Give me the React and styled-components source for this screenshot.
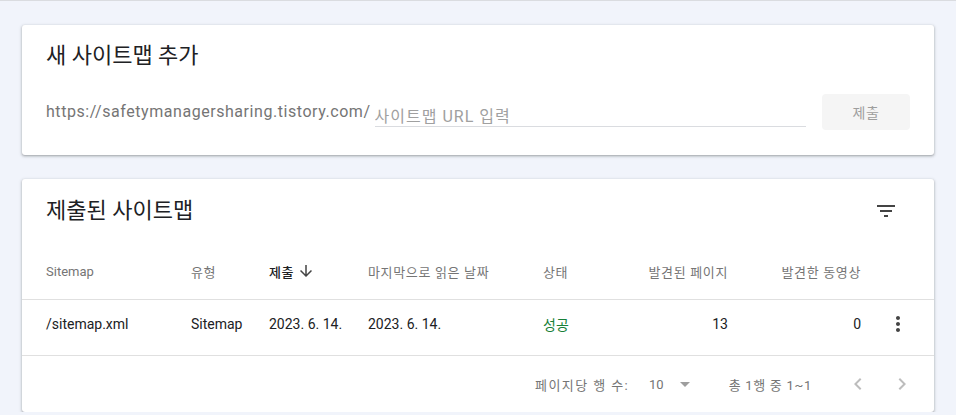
import React from 'react'
import styled, { createGlobalStyle } from 'styled-components'

const GlobalStyle = createGlobalStyle`
  html, body {
    margin: 0;
    padding: 0;
    background: #f1f4fb;
    font-family: Roboto, "Noto Sans CJK KR", sans-serif;
    color: #202124;
  }
`

const Page = styled.div`
  border-top: 1px solid #dadce0;
  padding: 24px 22px 0;
  display: flex;
  flex-direction: column;
  gap: 24px;
`

const Card = styled.section`
  background: #fff;
  border-radius: 3px;
  box-shadow: 0 1px 2px 0 rgba(60, 64, 67, 0.3), 0 1px 3px 1px rgba(60, 64, 67, 0.15);
`

const AddCard = styled(Card)`
  padding: 17px 24px 25px;
`

const Title = styled.h2`
  margin: 0;
  font-size: 22px;
  line-height: 28px;
  font-weight: 400;
  color: #202124;
`

const InputRow = styled.div`
  display: flex;
  align-items: center;
  height: 36px;
  margin-top: 24px;
`

const Prefix = styled.span`
  font-size: 16px;
  line-height: 20px;
  letter-spacing: 0.55px;
  color: #757575;
  margin-right: 4px;
`

const UrlInput = styled.input`
  flex: 1;
  box-sizing: border-box;
  height: 24px;
  margin-top: 6px;
  padding: 4px 0 0;
  border: none;
  border-bottom: 1px solid #dadce0;
  outline: none;
  font-family: inherit;
  font-size: 16px;
  letter-spacing: 1px;
  color: #202124;
  background: transparent;

  &::placeholder {
    color: #a0a0a0;
  }
`

const SubmitButton = styled.button`
  width: 88px;
  height: 36px;
  margin-left: 16px;
  border: none;
  border-radius: 4px;
  background: #f5f5f5;
  color: #9e9e9e;
  font-family: inherit;
  font-size: 14px;
  letter-spacing: 0.5px;
`

const TitleBar = styled.div`
  display: flex;
  align-items: center;
  justify-content: space-between;
  height: 64px;
  padding: 0 24px;
`

const IconButton = styled.button`
  display: flex;
  align-items: center;
  justify-content: center;
  width: ${p => p.size || 48}px;
  height: ${p => p.size || 48}px;
  padding: 0;
  border: none;
  background: none;
  color: ${p => (p.disabled ? '#bdbdbd' : '#444')};
`

const Row = styled.div`
  display: grid;
  grid-template-columns: 145px 78px 99px 175px 80px 105px 133px 49px;
  align-items: center;
  box-sizing: border-box;
  height: ${p => (p.head ? 57 : 56)}px;
  padding: 0 24px ${p => (p.head ? 0 : 8)}px;
  border-bottom: 1px solid #e0e0e0;
`

const HeadCell = styled.div`
  display: flex;
  align-items: center;
  justify-content: ${p => (p.right ? 'flex-end' : 'flex-start')};
  font-size: 13px;
  letter-spacing: ${p => (p.ko ? 0.65 : 0)}px;
  color: ${p => (p.active ? '#202124' : '#757575')};
  font-weight: ${p => (p.active ? 500 : 400)};
`

const Cell = styled.div`
  display: flex;
  align-items: center;
  justify-content: ${p => (p.right ? 'flex-end' : 'flex-start')};
  font-size: 14px;
  color: ${p => p.color || '#202124'};
`

const Footer = styled.div`
  display: flex;
  align-items: center;
  justify-content: flex-end;
  height: 56px;
  padding-right: 12px;
  font-size: 13px;
  color: #757575;
`

const FooterLabel = styled.span`
  letter-spacing: ${p => p.spacing}px;
`

const PageSize = styled.div`
  display: flex;
  align-items: center;
  gap: 9px;
  margin: 0 32px 0 20px;
  color: #757575;
`

const Pager = styled.div`
  display: flex;
  gap: 4px;
  margin-left: 26px;
`

const Svg = ({ d, size = 24, color = 'currentColor' }) => (
  <svg width={size} height={size} viewBox="0 0 24 24" fill={color}>
    <path d={d} />
  </svg>
)

const icons = {
  filter: 'M10 18h4v-2h-4v2zM3 6v2h18V6H3zm3 7h12v-2H6v2z',
  more: 'M12 8c1.1 0 2-.9 2-2s-.9-2-2-2-2 .9-2 2 .9 2 2 2zm0 2c-1.1 0-2 .9-2 2s.9 2 2 2 2-.9 2-2-.9-2-2-2zm0 6c-1.1 0-2 .9-2 2s.9 2 2 2 2-.9 2-2-.9-2-2-2z',
  down: 'M20 12l-1.41-1.41L13 16.17V4h-2v12.17l-5.58-5.59L4 12l8 8 8-8z',
  drop: 'M7 10l5 5 5-5z',
  left: 'M15.41 7.41L14 6l-6 6 6 6 1.41-1.41L10.83 12z',
  right: 'M10 6L8.59 7.41 13.17 12l-4.58 4.59L10 18l6-6z',
}

const columns = [
  { label: 'Sitemap' },
  { label: '유형', ko: true },
  { label: '제출', ko: true, active: true },
  { label: '마지막으로 읽은 날짜', ko: true },
  { label: '상태', ko: true },
  { label: '발견된 페이지', ko: true, right: true },
  { label: '발견한 동영상', ko: true, right: true },
]

const rows = [
  {
    path: '/sitemap.xml',
    type: 'Sitemap',
    submitted: '2023. 6. 14.',
    lastRead: '2023. 6. 14.',
    status: '성공',
    pages: 13,
    videos: 0,
  },
]

export default function App() {
  return (
    <>
      <GlobalStyle />
      <Page>
        <AddCard>
          <Title>새 사이트맵 추가</Title>
          <InputRow>
            <Prefix>https://safetymanagersharing.tistory.com/</Prefix>
            <UrlInput placeholder="사이트맵 URL 입력" />
            <SubmitButton disabled>제출</SubmitButton>
          </InputRow>
        </AddCard>

        <Card>
          <TitleBar>
            <Title>제출된 사이트맵</Title>
            <IconButton>
              <Svg d={icons.filter} color="#444" />
            </IconButton>
          </TitleBar>

          <Row head>
            {columns.map(c => (
              <HeadCell key={c.label} active={c.active} right={c.right} ko={c.ko}>
                {c.label}
                {c.active && (
                  <span style={{ display: 'flex', marginLeft: 3 }}>
                    <Svg d={icons.down} size={18} color="#444" />
                  </span>
                )}
              </HeadCell>
            ))}
            <div />
          </Row>

          {rows.map(r => (
            <Row key={r.path}>
              <Cell>{r.path}</Cell>
              <Cell>{r.type}</Cell>
              <Cell>{r.submitted}</Cell>
              <Cell>{r.lastRead}</Cell>
              <Cell color="#188038">{r.status}</Cell>
              <Cell right>{r.pages}</Cell>
              <Cell right>{r.videos}</Cell>
              <Cell right>
                <Svg d={icons.more} color="#444" />
              </Cell>
            </Row>
          ))}

          <Footer>
            <FooterLabel spacing={1.4}>페이지당 행 수:</FooterLabel>
            <PageSize>
              <span>10</span>
              <Svg d={icons.drop} color="#9e9e9e" />
            </PageSize>
            <FooterLabel spacing={0.7}>총 1행 중 1~1</FooterLabel>
            <Pager>
              <IconButton size={40} disabled>
                <Svg d={icons.left} />
              </IconButton>
              <IconButton size={40} disabled>
                <Svg d={icons.right} />
              </IconButton>
            </Pager>
          </Footer>
        </Card>
      </Page>
    </>
  )
}
